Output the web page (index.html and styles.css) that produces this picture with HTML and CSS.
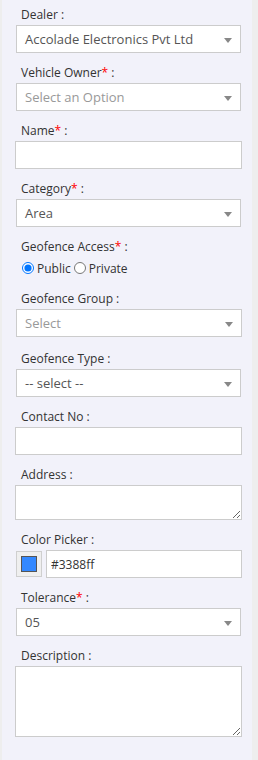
FILE: index.html
```html
<!DOCTYPE html>
<html lang="en">
<head>
    <meta charset="UTF-8">
    <meta name="viewport" content="width=device-width, initial-scale=1.0">
    <title>Add Geofence</title>
    <link rel="stylesheet" href="styles.css">
</head>
<body>
    <div class="panel">
        <div class="field">
            <label class="field-label">Dealer :</label>
            <div class="select-box">
                <span class="select-text">Accolade Electronics Pvt Ltd</span>
                <span class="caret"></span>
            </div>
        </div>

        <div class="field">
            <label class="field-label">Vehicle Owner<span class="req">*</span> :</label>
            <div class="select-box">
                <span class="select-text placeholder">Select an Option</span>
                <span class="caret"></span>
            </div>
        </div>

        <div class="field">
            <label class="field-label">Name<span class="req">*</span> :</label>
            <input type="text" class="text-input">
        </div>

        <div class="field">
            <label class="field-label">Category<span class="req">*</span> :</label>
            <div class="select-box">
                <span class="select-text">Area</span>
                <span class="caret"></span>
            </div>
        </div>

        <div class="field">
            <label class="field-label">Geofence Access<span class="req">*</span> :</label>
            <div class="radio-row">
                <label class="radio-option"><input type="radio" name="access" checked> Public</label>
                <label class="radio-option"><input type="radio" name="access"> Private</label>
            </div>
        </div>

        <div class="field group-field">
            <label class="field-label">Geofence Group :</label>
            <div class="select-box wide">
                <span class="select-text placeholder">Select</span>
                <span class="caret"></span>
            </div>
        </div>

        <div class="field">
            <label class="field-label">Geofence Type :</label>
            <div class="select-box">
                <span class="select-text">-- select --</span>
                <span class="caret"></span>
            </div>
        </div>

        <div class="field">
            <label class="field-label">Contact No :</label>
            <input type="text" class="text-input">
        </div>

        <div class="field">
            <label class="field-label">Address :</label>
            <textarea class="text-area short"></textarea>
        </div>

        <div class="field">
            <label class="field-label">Color Picker :</label>
            <div class="color-row">
                <button class="swatch-btn"><span class="swatch"></span></button>
                <input type="text" class="text-input color-input" value="#3388ff">
            </div>
        </div>

        <div class="field">
            <label class="field-label">Tolerance<span class="req">*</span> :</label>
            <div class="select-box">
                <span class="select-text">05</span>
                <span class="caret"></span>
            </div>
        </div>

        <div class="field">
            <label class="field-label">Description :</label>
            <textarea class="text-area tall"></textarea>
        </div>
    </div>
</body>
</html>
```

FILE: styles.css
```css
:root {
    --page-bg: #eeeeee;
    --panel-bg: #f2f2fa;
    --border-color: #cccccc;
    --label-color: #333333;
    --text-color: #555555;
    --muted-color: #999999;
}

body {
    margin: 0;
    background: var(--page-bg);
    font-family: 'Open Sans', sans-serif;
    font-size: 12px;
    color: var(--label-color);
}

.panel {
    margin: 0 6px 0 2px;
    padding: 7px 10px 20px 13px;
    background: var(--panel-bg);
    min-height: 733px;
}

.field {
    margin-bottom: 12px;
}

.group-field {
    margin-bottom: 14px;
}

.field-label {
    display: block;
    padding-left: 6px;
    line-height: 16px;
    margin-bottom: 2px;
}

.req {
    color: #ff0000;
}

.select-box {
    display: flex;
    align-items: center;
    justify-content: space-between;
    height: 28px;
    box-sizing: border-box;
    margin: 0 1px;
    padding: 0 8px;
    background: #ffffff;
    border: 1px solid var(--border-color);
    font-size: 13px;
    color: var(--text-color);
}

.select-box.wide {
    margin-right: 0;
}

.placeholder {
    color: var(--muted-color);
}

.caret {
    width: 0;
    height: 0;
    border-left: 4px solid transparent;
    border-right: 4px solid transparent;
    border-top: 5px solid #888888;
    margin-top: 2px;
}

.text-input,
.text-area {
    display: block;
    width: 100%;
    box-sizing: border-box;
    margin: 0;
    padding: 0 8px;
    height: 28px;
    background: #ffffff;
    border: 1px solid var(--border-color);
    font-family: 'Open Sans', sans-serif;
    font-size: 12px;
    color: var(--label-color);
    outline: none;
}

.text-area {
    resize: vertical;
}

.text-area.short {
    height: 35px;
}

.text-area.tall {
    height: 71px;
}

.radio-row {
    display: flex;
    align-items: center;
    height: 22px;
    padding-left: 6px;
}

.radio-option {
    display: flex;
    align-items: center;
    margin-right: 2px;
}

.radio-option input {
    margin: 0 3px 0 1px;
    width: 12px;
    height: 12px;
}

.color-row {
    display: flex;
    gap: 4px;
    align-items: center;
}

.color-row .color-input {
    flex: 1;
    padding: 0 4px;
}

.swatch-btn {
    display: flex;
    align-items: center;
    justify-content: center;
    width: 26px;
    height: 26px;
    margin-left: 1px;
    padding: 0;
    background: #efefef;
    border: 1px solid #cfcfcf;
}

.swatch {
    width: 14px;
    height: 14px;
    background: #3388ff;
    border: 1px solid #555555;
}
```
